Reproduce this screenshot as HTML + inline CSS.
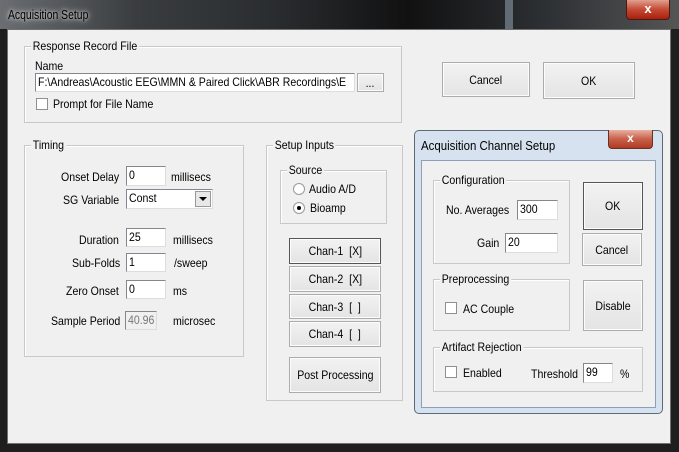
<!DOCTYPE html>
<html><head><style>
*{box-sizing:border-box;margin:0;padding:0}
body{width:679px;height:452px;overflow:hidden;background:#1e1e1e;font-family:"Liberation Sans",sans-serif;font-size:12px;color:#000;position:relative}
.a{position:absolute}
.t{position:absolute;white-space:nowrap;line-height:14px;transform:scaleX(.88);transform-origin:left center}
.g{position:absolute;border:1px solid #c8c8c8;box-shadow:inset 1px 1px 0 #fff}
.gl{position:absolute;top:-8px;left:6px;background:#f0f0f0;padding:0 2px;white-space:nowrap;line-height:14px;transform:scaleX(.88);transform-origin:left center}
.in{position:absolute;background:#fff;border:1px solid #828790;border-right-color:#ddd;border-bottom-color:#ddd;padding-left:2px;line-height:16px;white-space:nowrap;overflow:hidden}
.in span{display:inline-block;transform:scaleX(.88);transform-origin:left center}
.b{position:absolute;background:linear-gradient(#f2f2f2,#e4e4e4);border:1px solid #acacac;box-shadow:inset 0 0 0 1px #fcfcfc;display:flex;align-items:center;justify-content:center;white-space:nowrap}
.b span{display:inline-block;transform:scaleX(.88)}
.cb{position:absolute;width:12px;height:12px;background:#fff;border:1px solid #8e8f8f}
</style></head><body>
<div class="a" style="left:0;top:0;width:679px;height:29px;background:linear-gradient(90deg,#6a6e72 0%,#3a3d40 20%,#2a2d30 40%,#111 60%,#2c2f33 80%,#555 100%)"></div>
<div class="a" style="left:505px;top:0;width:8px;height:29px;background:#8a9aa8;opacity:.6"></div>
<div class="t" style="left:8px;top:8px;font-size:13px;color:#000;transform:scaleX(.8);text-shadow:0 0 8px #ddd,0 0 4px #ccc">Acquisition Setup</div>
<div class="a" style="left:626px;top:0;width:44px;height:20px;background:linear-gradient(#e0a090,#c44a32 50%,#a8200f);border:1px solid #4a1a10;border-top:none;border-radius:0 0 4px 4px;color:#fff;font-weight:bold;font-size:13px;text-align:center;line-height:18px">x</div>
<div class="a" style="left:7px;top:29px;width:664px;height:415px;background:#f0f0f0;border:1px solid #707070"></div>

<div class="g" style="left:24px;top:46px;width:378px;height:77px"><div class="gl">Response Record File</div></div>
<div class="t" style="left:35px;top:59px">Name</div>
<div class="in" style="left:35px;top:73px;width:320px;height:19px"><span>F:\Andreas\Acoustic EEG\MMN &amp; Paired Click\ABR Recordings\E</span></div>
<div class="b" style="left:357px;top:73px;width:27px;height:19px"><span>...</span></div>
<div class="cb" style="left:36px;top:98px"></div>
<div class="t" style="left:53px;top:97px">Prompt for File Name</div>
<div class="b" style="left:442px;top:62px;width:88px;height:35px"><span>Cancel</span></div>
<div class="b" style="left:543px;top:62px;width:92px;height:37px"><span>OK</span></div>

<div class="g" style="left:24px;top:145px;width:220px;height:212px"><div class="gl">Timing</div></div>
<div class="t" style="left:61px;top:170px">Onset Delay</div>
<div class="in" style="left:126px;top:166px;width:40px;height:20px"><span>0</span></div>
<div class="t" style="left:171px;top:170px">millisecs</div>
<div class="t" style="left:63px;top:193px">SG Variable</div>
<div class="in" style="left:126px;top:189px;width:87px;height:20px"><span>Const</span></div>
<div class="a" style="left:195px;top:191px;width:16px;height:16px;background:#e8e8e8;border:1px solid #999"><div style="margin:5px auto 0;width:0;height:0;border-left:4px solid transparent;border-right:4px solid transparent;border-top:4px solid #000"></div></div>
<div class="t" style="left:79px;top:233px">Duration</div>
<div class="in" style="left:126px;top:228px;width:40px;height:19px"><span>25</span></div>
<div class="t" style="left:173px;top:233px">millisecs</div>
<div class="t" style="left:72px;top:256px">Sub-Folds</div>
<div class="in" style="left:126px;top:253px;width:40px;height:19px"><span>1</span></div>
<div class="t" style="left:174px;top:256px">/sweep</div>
<div class="t" style="left:66px;top:284px">Zero Onset</div>
<div class="in" style="left:126px;top:280px;width:40px;height:19px"><span>0</span></div>
<div class="t" style="left:173px;top:284px">ms</div>
<div class="t" style="left:51px;top:314px">Sample Period</div>
<div class="in" style="left:125px;top:311px;width:32px;height:19px;background:#f0f0f0;color:#777"><span>40.96</span></div>
<div class="t" style="left:173px;top:314px">microsec</div>

<div class="g" style="left:266px;top:145px;width:137px;height:256px"><div class="gl">Setup Inputs</div></div>
<div class="g" style="left:280px;top:170px;width:107px;height:54px"><div class="gl">Source</div></div>
<div class="a" style="left:293px;top:183px;width:12px;height:12px;border-radius:50%;background:#fff;border:1px solid #999"></div>
<div class="t" style="left:309px;top:182px">Audio A/D</div>
<div class="a" style="left:293px;top:202px;width:12px;height:12px;border-radius:50%;background:#fff;border:1px solid #999"><div style="width:4px;height:4px;background:#000;border-radius:50%;margin:3px"></div></div>
<div class="t" style="left:310px;top:201px">Bioamp</div>
<div class="b" style="left:289px;top:238px;width:92px;height:26px;border-color:#555"><span>Chan-1 &nbsp;[X]</span></div>
<div class="b" style="left:289px;top:266px;width:92px;height:26px"><span>Chan-2 &nbsp;[X]</span></div>
<div class="b" style="left:289px;top:294px;width:92px;height:25px"><span>Chan-3 &nbsp;[ &nbsp;]</span></div>
<div class="b" style="left:289px;top:321px;width:92px;height:26px"><span>Chan-4 &nbsp;[ &nbsp;]</span></div>
<div class="b" style="left:289px;top:357px;width:92px;height:36px"><span>Post Processing</span></div>

<div class="a" style="left:414px;top:130px;width:249px;height:284px;background:#d6e2ef;border:1px solid #5d6a78;border-radius:5px"></div>
<div class="t" style="left:421px;top:139px;font-size:13px">Acquisition Channel Setup</div>
<div class="a" style="left:608px;top:130px;width:45px;height:19px;background:linear-gradient(#e8b0a0,#c8604a 50%,#b03a24);border:1px solid #6a3020;border-top:none;border-radius:0 0 4px 4px;color:#fff;font-weight:bold;text-align:center;line-height:17px">x</div>
<div class="a" style="left:421px;top:160px;width:235px;height:248px;background:#f0f0f0;border:1px solid #8da0b5"></div>
<div class="g" style="left:433px;top:180px;width:137px;height:84px"><div class="gl">Configuration</div></div>
<div class="t" style="left:446px;top:203px">No. Averages</div>
<div class="in" style="left:517px;top:200px;width:41px;height:20px"><span>300</span></div>
<div class="t" style="left:477px;top:236px">Gain</div>
<div class="in" style="left:505px;top:233px;width:53px;height:20px"><span>20</span></div>
<div class="b" style="left:583px;top:182px;width:60px;height:48px;border-color:#555"><span>OK</span></div>
<div class="b" style="left:582px;top:233px;width:60px;height:33px"><span>Cancel</span></div>
<div class="g" style="left:433px;top:279px;width:137px;height:52px"><div class="gl">Preprocessing</div></div>
<div class="cb" style="left:445px;top:302px"></div>
<div class="t" style="left:463px;top:302px">AC Couple</div>
<div class="b" style="left:583px;top:280px;width:60px;height:51px"><span>Disable</span></div>
<div class="g" style="left:433px;top:347px;width:210px;height:45px"><div class="gl">Artifact Rejection</div></div>
<div class="cb" style="left:445px;top:366px"></div>
<div class="t" style="left:463px;top:366px">Enabled</div>
<div class="t" style="left:531px;top:367px">Threshold</div>
<div class="in" style="left:583px;top:363px;width:30px;height:20px"><span>99</span></div>
<div class="t" style="left:620px;top:367px">%</div>
</body></html>
